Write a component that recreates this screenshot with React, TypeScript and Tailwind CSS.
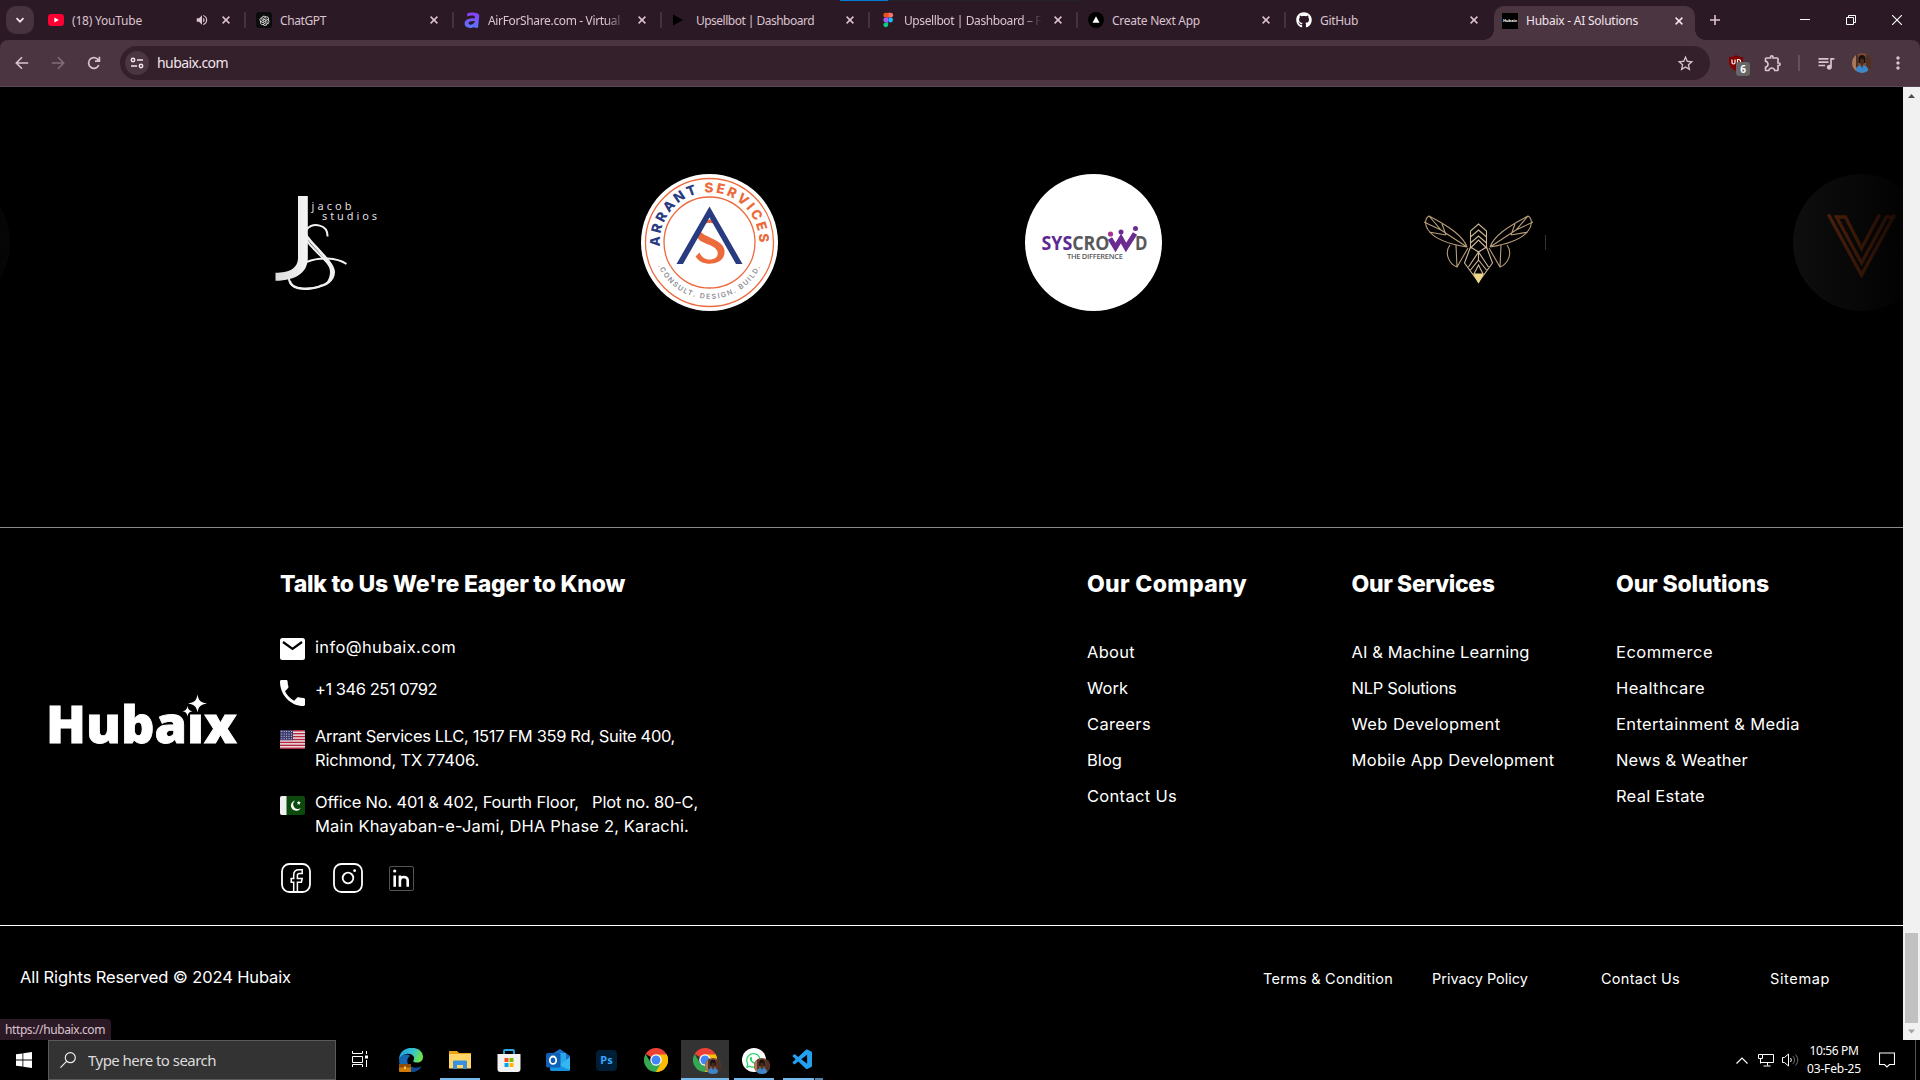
import React, { useLayoutEffect, useRef, useState } from "react";
import { FaGithub } from "react-icons/fa";
import { AiOutlineOpenAI } from "react-icons/ai";
import { FaWhatsapp } from "react-icons/fa";
import { VscVscode } from "react-icons/vsc";
import { MdOutlineExtension, MdOutlineQueueMusic, MdMoreVert, MdStarBorder, MdVolumeUp } from "react-icons/md";

/* Text spaced out evenly so that it fills a given width. */
function Fit({ w, className = "", children }: { w: number; className?: string; children: string }) {
  const ref = useRef<HTMLSpanElement>(null);
  const [spacing, setSpacing] = useState(0);
  useLayoutEffect(() => {
    if (ref.current) {
      const natural = ref.current.getBoundingClientRect().width;
      setSpacing((w - natural) / children.length);
    }
  }, []);
  return (
    <span ref={ref} className={"inline-block whitespace-pre " + className} style={{ letterSpacing: spacing }}>
      {children}
    </span>
  );
}

function CloseX({ active = false }: { active?: boolean }) {
  return (
    <svg viewBox="0 0 8 8" className={"size-2 shrink-0 " + (active ? "text-[#f3e4ec]" : "text-[#dcc3d0]")}>
      <path d="M.6.6l6.8 6.8M7.4.6L.6 7.4" stroke="currentColor" strokeWidth="1.5" />
    </svg>
  );
}

function YoutubeIcon() {
  return (
    <svg viewBox="0 0 16 16" className="size-4">
      <rect y="2" width="16" height="12" rx="3" fill="#ff0033" />
      <path d="M6.4 5.4v5.2L10.8 8z" fill="#fff" />
    </svg>
  );
}
function AirIcon() {
  return (
    <svg viewBox="0 0 16 16" className="size-4">
      <defs>
        <linearGradient id="air" x1="0" y1="0" x2="0" y2="1">
          <stop offset="0" stopColor="#8a3df5" />
          <stop offset="1" stopColor="#5a78ff" />
        </linearGradient>
      </defs>
      <path
        d="M3 1.6C5 .2 15.600-.6 15.300 4L14 15.800h-3.600l.1-1.300C8 17 .6 16.500.6 11.600.6 7.500 5 6 11 6.300 11.600 3.200 7.500 3 3.400 4.600zM10.800 9C7 8.800 4.600 9.600 4.600 11.300c0 2.400 5.600 2 6.200-2.300z"
        fill="url(#air)"
      />
    </svg>
  );
}
function FigmaIcon() {
  return (
    <svg viewBox="0 0 16 16" className="size-4">
      <path d="M5.700.8H8.200v4.800H5.700a2.400 2.400 0 010-4.800z" fill="#f24e1e" />
      <path d="M8.200.8h2.500a2.400 2.400 0 010 4.800H8.200z" fill="#ff7262" />
      <path d="M5.700 5.600h2.500v4.800H5.700a2.400 2.400 0 010-4.800z" fill="#a259ff" />
      <circle cx="10.600" cy="8" r="2.400" fill="#1abcfe" />
      <path d="M5.700 10.400h2.500v2.400a2.450 2.400 0 11-2.500-2.400z" fill="#0acf83" />
    </svg>
  );
}

type TabInfo = { title: string; w: number; icon: React.ReactNode; audio?: boolean; fade?: boolean };
const tabs: TabInfo[] = [
  { title: "(18) YouTube", w: 70, icon: <YoutubeIcon />, audio: true },
  {
    title: "ChatGPT",
    w: 46,
    icon: (
      <span className="flex size-4 items-center justify-center rounded-[3px] bg-[#0c0c0c] text-[#e8e8e8]">
        <AiOutlineOpenAI size={13} />
      </span>
    ),
  },
  { title: "AirForShare.com - Virtual", w: 132, icon: <AirIcon />, fade: true },
  {
    title: "Upsellbot | Dashboard",
    w: 118,
    icon: (
      <svg viewBox="0 0 16 16" className="size-4">
        <path d="M1 2.500v11L11 8z" fill="#000" />
      </svg>
    ),
  },
  { title: "Upsellbot | Dashboard – F", w: 137, icon: <FigmaIcon />, fade: true },
  {
    title: "Create Next App",
    w: 88,
    icon: (
      <svg viewBox="0 0 16 16" className="size-4">
        <circle cx="8" cy="8" r="8" fill="#000" />
        <path d="M8 4.200l3.500 6.600h-7z" fill="#fff" />
      </svg>
    ),
  },
  { title: "GitHub", w: 38, icon: <FaGithub size={16} className="text-white" /> },
];

function TabStrip() {
  return (
    <div className="flex h-10 bg-[#2b1a25] font-['Noto_Sans',sans-serif] text-[12px] text-[#dcc3d0]">
      <div className="mt-[6px] ml-[6px] flex h-7 w-7 shrink-0 items-center justify-center rounded-[10px] bg-[#47333f]">
        <svg viewBox="0 0 10 10" className="size-[10px]">
          <path d="M1.500 3.200L5 6.700l3.500-3.500" stroke="#f3e4ec" strokeWidth="1.700" fill="none" />
        </svg>
      </div>
      <div className="ml-[4px] flex">
        {tabs.map((t, i) => (
          <div key={t.title + i} className={"relative flex h-10 items-center pl-[10px] " + (i === 6 ? "w-[209px]" : "w-[208px]")}>
            <div className="mr-2 size-4 shrink-0">{t.icon}</div>
            <div
              className={
                "mt-px h-5 w-[140px] leading-5 " +
                (t.fade ? "[mask-image:linear-gradient(to_right,black_118px,transparent_138px)]" : "")
              }
            >
              <Fit w={t.w}>{t.title}</Fit>
            </div>
            <div className="-ml-4 flex w-[26px] justify-start">
              {t.audio && <MdVolumeUp size={14} className="-ml-[1px]" />}
            </div>
            <CloseX />
            {i < 6 && <div className="absolute top-3 right-0 h-4 w-[2px] rounded bg-[#47333f]" />}
          </div>
        ))}
      </div>
      <div className="relative -ml-px mt-[6px] flex h-[34px] w-[201px] shrink-0 items-center rounded-t-[10px] bg-[#4a3540] pb-[5px] pl-2 text-[#f3e4ec]">
        <div className="absolute bottom-0 -left-[10px] size-[10px] bg-[radial-gradient(circle_at_0_0,transparent_9.500px,#4a3540_10px)]" />
        <div className="absolute -right-[10px] bottom-0 size-[10px] bg-[radial-gradient(circle_at_100%_0,transparent_9.500px,#4a3540_10px)]" />
        <div className="mr-2 flex size-4 items-center justify-center bg-black text-[4px] font-bold text-white">Hubaix</div>
        <div className="w-[149px] leading-5">
          <Fit w={112}>Hubaix - AI Solutions</Fit>
        </div>
        <CloseX active />
      </div>
      <svg viewBox="0 0 10 10" className="mt-[15px] ml-[15px] size-[10px] shrink-0">
        <path d="M5 0v10M0 5h10" stroke="#dcc3d0" strokeWidth="1.600" />
      </svg>
      <div className="mt-[15px] ml-auto flex h-[10px] gap-[36px] pr-[18px] text-white">
        <svg viewBox="0 0 10 10" className="size-[10px]">
          <path d="M0 4.500h10" stroke="currentColor" />
        </svg>
        <svg viewBox="0 0 10 10" className="size-[10px]" fill="none" stroke="currentColor">
          <path d="M.5 2.500h7v7h-7zM2.500 2.500v-2h7v7h-2" />
        </svg>
        <svg viewBox="0 0 10 10" className="size-[10px]">
          <path d="M0 0l10 10M10 0L0 10" stroke="currentColor" strokeWidth="1.100" />
        </svg>
      </div>
    </div>
  );
}

function Avatar({ className }: { className: string }) {
  return (
    <svg viewBox="0 0 20 20" className={className}>
      <defs>
        <clipPath id="avatar">
          <circle cx="10" cy="10" r="10" />
        </clipPath>
      </defs>
      <g clipPath="url(#avatar)">
        <rect width="20" height="20" fill="#7a4a32" />
        <path d="M0 0h4v20H0z" fill="#a87a5a" />
        <path d="M4 0h2v14H4zM14 2h6v18h-6z" fill="#4f3024" />
        <path d="M6.500 5c.5-4 6.500-4 7 0v5h-7z" fill="#17100f" />
        <ellipse cx="10" cy="8.500" rx="2.200" ry="3" fill="#4a2b20" />
        <path d="M3.500 20c0-6 2-7.500 6.500-7.500s6.500 1.500 6.500 7.500z" fill="#3f86c8" />
        <path d="M9 11.500h2l-1 4z" fill="#3a2119" />
      </g>
    </svg>
  );
}

function Toolbar() {
  return (
    <div className="bg-[#2b1a25]">
      <div className="flex h-[47px] items-center rounded-t-[8px] border-b border-[#5c4853] bg-[#4a3540] text-[#dcc3d0]">
        <div className="flex w-[120px] items-center gap-[20px] pl-[14px]">
          <svg viewBox="0 0 16 16" className="size-4" fill="none" stroke="currentColor" strokeWidth="1.600">
            <path d="M14.200 8H2.500M8 2.300L2.300 8 8 13.700" />
          </svg>
          <svg viewBox="0 0 16 16" className="size-4 text-[#846d79]" fill="none" stroke="currentColor" strokeWidth="1.600">
            <path d="M1.800 8h11.700M8 2.300L13.700 8 8 13.700" />
          </svg>
          <svg viewBox="0 0 16 16" className="size-4" fill="none" stroke="currentColor" strokeWidth="1.700">
            <path d="M12.800 10A5.300 5.300 0 1112.600 5.500M13.400 1.800v4.400H9" />
          </svg>
        </div>
        <div className="flex h-[34px] w-[1590px] items-center rounded-full bg-[#33202b] pr-[15px] pl-[5px]">
          <div className="flex size-6 items-center justify-center rounded-full bg-[#4a3540]">
            <svg viewBox="0 0 14 12" className="h-3 w-[14px]" fill="none" stroke="#f3e4ec" strokeWidth="1.500">
              <circle cx="3" cy="3" r="1.700" />
              <path d="M7 3h6M1 9h6" />
              <circle cx="11" cy="9" r="1.700" />
            </svg>
          </div>
          <div className="ml-[8px] flex-1 font-['Noto_Sans',sans-serif] text-[14px] leading-5 text-[#f3e4ec]">
            <Fit w={71}>hubaix.com</Fit>
          </div>
          <MdStarBorder size={19} />
        </div>
        <div className="relative ml-[18px] h-5 w-[22px]">
          <svg viewBox="0 0 16 16" className="mt-[2px] size-4">
            <path d="M8 0c2 1.500 4 2 7 2v5c0 4-3 7-7 9-4-2-7-5-7-9V2c3 0 5-.5 7-2z" fill="#800000" />
            <path d="M4 4.500v3c0 2 3 2 3 0v-3M9.500 9V4.500h1.200c2.500 0 2.500 4.500 0 4.500z" fill="none" stroke="#fff" strokeWidth="1.200" />
          </svg>
          <div className="absolute top-[9px] left-[8px] flex h-[14px] w-[14px] items-center justify-center rounded-[3px] bg-[#666] font-['Noto_Sans',sans-serif] text-[10px] font-bold text-white">
            6
          </div>
        </div>
        <MdOutlineExtension size={20} className="mb-px ml-[13px]" />
        <div className="ml-[15px] h-4 w-[2px] bg-[#66505c]" />
        <MdOutlineQueueMusic size={20} className="mb-px ml-[16px]" />
        <Avatar className="ml-[16px] size-5" />
        <MdMoreVert size={20} className="ml-[16px]" />
      </div>
    </div>
  );
}

function JacobLogo() {
  return (
    <svg viewBox="257 174 137 137" className="size-[137px]">
      <defs>
        <linearGradient id="js" x1="0" y1="0" x2="1" y2="0">
          <stop offset="0" stopColor="#dcdcdc" />
          <stop offset="1" stopColor="#f5f5f5" />
        </linearGradient>
      </defs>
      <path d="M298 196h9.800v62c0 14-11 22.500-32.300 22.800v-8c13 0 22.500-4 22.500-15z" fill="url(#js)" />
      <path
        d="M327.500 236.500C328 224 313 222.500 307 229c-5 6 1 14 6 19 8 9 21 19 20 27-2 14-41 20-43 6"
        fill="none"
        stroke="#f0f0f0"
        strokeWidth="2"
      />
      <path d="M306 231c1 9 29 29 29 41 0 9-9 15-16 15 7-2 11-8 11-15 0-12-21-28-24-35z" fill="#f0f0f0" />
      <path d="M306.500 262c12-5 30-5 40 2M289 279c1 13 26 10 33 6" fill="none" stroke="#f0f0f0" strokeWidth="2" />
      <g fill="#dedede" fontFamily="Noto Sans, sans-serif" fontSize="11">
        <text x="311.500" y="209.500" textLength="40">jacob</text>
        <text x="322" y="219.500" textLength="55">studios</text>
      </g>
    </svg>
  );
}

function ArrantLogo() {
  return (
    <svg viewBox="-68.500 -68.500 137 137" className="size-[137px]">
      <defs>
        <path id="arcTop" d="M-49.500 4A49.700 49.700 0 1149.500 4" />
        <path id="arcBottom" d="M-51.500 23A56.400 56.400 0 0051.500 23" />
      </defs>
      <circle r="68.500" fill="#fff" />
      <circle r="64" fill="none" stroke="#ec6a3c" strokeWidth="1.300" />
      <circle r="45.500" fill="none" stroke="#ec6a3c" strokeWidth="1.300" />
      <text fontFamily="Inter, sans-serif" fontSize="13.500" fontWeight="800" fill="#283a80">
        <textPath href="#arcTop" textLength="161">
          ARRANT <tspan fill="#ec6a3c">SERVICES</tspan>
        </textPath>
      </text>
      <text fontFamily="Inter, sans-serif" fontSize="7" fontWeight="600" fill="#8b8b93">
        <textPath href="#arcBottom" textLength="128">
          <tspan fill="#ec6a3c">.</tspan>CONSULT<tspan fill="#ec6a3c">.</tspan> DESIGN. BUILD<tspan fill="#ec6a3c">.</tspan>
        </textPath>
      </text>
      <path d="M-3-23h6l3 4.500C3-20-3-20-6-18.500zM-9-11C-5-5 14-3 15 8c1 11-10 14-18 13-6-1-9-4-11-7l4-4c2 5 6 7 10 7 7 0 9-4 8-8C6 2-10 1-12-5z" fill="#ec6a3c" />
      <path d="M0-36l33 57.500h-6.500L0-25l-26.500 46.500h-6.500z" fill="#283a80" />
    </svg>
  );
}

function SyscrowdLogo() {
  return (
    <svg viewBox="1025 174 137 137" className="size-[137px]">
      <circle cx="1093.500" cy="242.500" r="68.500" fill="#fff" />
      <text x="1041.500" y="250" textLength="68" lengthAdjust="spacingAndGlyphs" fontFamily="Open Sans, sans-serif" fontWeight="700" fontSize="19" fill="#58595b">
        <tspan fill="#5d2a91">SYS</tspan>CRO
      </text>
      <text x="1135" y="250" textLength="12.500" lengthAdjust="spacingAndGlyphs" fontFamily="Open Sans, sans-serif" fontWeight="700" fontSize="19" fill="#58595b">
        D
      </text>
      <path d="M1110 238.500l5.500 9 5.500-9 5 9 9-14" fill="none" stroke="#6b2c91" strokeWidth="5" />
      <circle cx="1110.500" cy="234" r="2.600" fill="#a83292" />
      <circle cx="1121" cy="232" r="2.500" fill="#6b2c91" />
      <circle cx="1135.500" cy="228.500" r="2.500" fill="#6b2c91" />
      <text x="1067" y="259" fontFamily="Open Sans, sans-serif" fontWeight="600" fontSize="7.500" textLength="56" fill="#58595b">
        THE DIFFERENCE
      </text>
    </svg>
  );
}

function BeeLogo() {
  const wing = (
    <g>
      <path d="M1467 247c-4-11-17-20-38-31-4 2-5 9 0 15 6 8 19 13 38 16M1429 216l12 14 26 17M1441 230l-17-8M1446 235l-4-11M1446 235l-17-3" />
      <path d="M1450 245c-6 8-1 19 7 22l11-19M1456 245l1 22" />
    </g>
  );
  return (
    <svg viewBox="1409 174 137 137" className="size-[137px]" fill="none" stroke="#b89c78" strokeWidth="1.100">
      {wing}
      <g transform="translate(2957 0) scale(-1 1)">{wing}</g>
      <path
        d="M1470.500 247v-16l8-7 8 7v16l-8 5zM1470.500 237l8-7 8 7M1470.500 243l8-7 8 7M1470.500 248l8-8 8 8M1470.500 247l-6 16 14 19 14-19-6-16M1478.500 252l-10 15M1478.500 252l10 15M1478.500 252v8l-8 10M1478.500 260l8 10M1474 274l4.500-9 4.500 9"
        stroke="#cdb695"
      />
      <path d="M1474 274h9l-4.500 8.500z" fill="#f0d88a" stroke="#f0d88a" />
      <path d="M1545.500 235v15" stroke="#333" strokeWidth="1" />
    </svg>
  );
}

function VLogo() {
  return (
    <svg viewBox="1793.500 174 137 137" className="size-[137px]">
      <defs>
        <linearGradient id="vbg" gradientUnits="userSpaceOnUse" x1="1793" y1="0" x2="1903" y2="0">
          <stop offset="0" stopColor="#0e0e0e" />
          <stop offset="1" stopColor="#020202" />
        </linearGradient>
        <linearGradient id="vfg" gradientUnits="userSpaceOnUse" x1="1826" y1="0" x2="1898" y2="0">
          <stop offset="0" stopColor="#4c200b" />
          <stop offset="1" stopColor="#1c0b03" />
        </linearGradient>
      </defs>
      <circle cx="1862" cy="242.500" r="68.500" fill="url(#vbg)" />
      <path
        d="M1829 214.500l33 60.500 33-60.500M1880 214.500l-18 34-16-31.500h-9l25 46 25-46h9"
        fill="none"
        stroke="url(#vfg)"
        strokeWidth="3.300"
      />
    </svg>
  );
}

function Carousel() {
  return (
    <section className="h-[441px] overflow-hidden border-b border-[#8a8a8a] pt-[87px]">
      <div className="-ml-[251px] flex w-[2304px]">
        {[
          <div className="size-[137px] rounded-full bg-[linear-gradient(to_right,#000_45%,#060606)]" />,
          <JacobLogo />,
          <ArrantLogo />,
          <SyscrowdLogo />,
          <BeeLogo />,
          <VLogo />,
        ].map((logo, i) => (
          <div key={i} className="flex w-96 justify-center">
            {logo}
          </div>
        ))}
      </div>
    </section>
  );
}

function HubaixLogo() {
  return (
    <svg viewBox="40 680 200 80" className="h-[80px] w-[200px]">
      <text
        x="46"
        y="743"
        fontFamily="Open Sans, sans-serif"
        fontWeight="800"
        fontSize="51.500"
        textLength="191"
        lengthAdjust="spacingAndGlyphs"
        fill="#fff"
        stroke="#fff"
        strokeWidth=".8"
      >
        Hubaix
      </text>
      <path d="M186 690h20v22.500h-20z" fill="#000" />
      <g fill="#fff">
        <path d="M197.500 694.500c1 6 3 8 9.500 9-6.500 1-8.500 3-9.500 9-1-6-3-8-9.500-9 6.500-1 8.500-3 9.500-9z" />
        <path d="M187.500 706c.5 3.500 2 4.800 5 5.300-3 .5-4.500 1.800-5 5.300-.5-3.500-2-4.800-5-5.300 3-.5 4.500-1.800 5-5.300z" />
      </g>
    </svg>
  );
}

function UsFlag() {
  return (
    <svg viewBox="0 0 25 19" className="h-[19px] w-[25px] rounded-[2px]">
      <rect width="25" height="19" fill="#f0eef0" />
      {[0, 1, 2, 3, 4, 5, 6].map((i) => (
        <rect key={i} y={i * 2.92} width="25" height="1.500" fill="#b3273e" />
      ))}
      <rect width="13" height="10.200" fill="#3c3b6e" />
      {[0, 1, 2, 3].map((r) =>
        [0, 1, 2, 3, 4].map((c) => <circle key={r * 5 + c} cx={1.8 + c * 2.4} cy={1.5 + r * 2.4} r=".5" fill="#fff" />)
      )}
    </svg>
  );
}
function PkFlag() {
  return (
    <svg viewBox="0 0 25 19" className="h-[19px] w-[25px] rounded-[2px]">
      <rect width="25" height="19" fill="#0b4a0b" />
      <rect width="6.500" height="19" fill="#f0f0f0" />
      <path d="M15 4.500a5.200 5.200 0 105.800 7.500A4.700 4.700 0 1115 4.500z" fill="#fff" />
      <path d="M18.800 4.800l.6 1.300 1.400.2-1 1 .2 1.400-1.200-.7-1.300.7.300-1.400-1-1 1.400-.2z" fill="#fff" />
    </svg>
  );
}

const columns = [
  {
    title: "Our Company",
    w: 160,
    links: [["About", 48], ["Work", 41], ["Careers", 64], ["Blog", 35], ["Contact Us", 90]] as [string, number][],
  },
  {
    title: "Our Services",
    w: 143,
    links: [["AI & Machine Learning", 178], ["NLP Solutions", 105], ["Web Development", 149], ["Mobile App Development", 203]] as [string, number][],
  },
  {
    title: "Our Solutions",
    w: 153,
    links: [["Ecommerce", 97], ["Healthcare", 89], ["Entertainment & Media", 184], ["News & Weather", 132], ["Real Estate", 89]] as [string, number][],
  },
];

function Footer() {
  return (
    <footer className="font-['Inter',sans-serif] text-white">
      <div className="flex h-[397px] pt-10">
        <div className="w-[280px] pt-[112px] pl-[40px]">
          <HubaixLogo />
        </div>
        <div className="w-[807px] text-[16.5px]">
          <h2 className="h-8 text-[23px] leading-8 font-extrabold">
            <Fit w={345}>Talk to Us We're Eager to Know</Fit>
          </h2>
          <div className="mt-[35px] flex h-6 leading-6">
            <svg viewBox="0 0 25 22" className="mt-[3px] mr-[10px] h-[22px] w-[25px]">
              <rect width="25" height="22" rx="2.500" fill="#fff" />
              <path d="M3 4l9.500 7L22 4" fill="none" stroke="#000" strokeWidth="2.200" />
            </svg>
            <Fit w={141}>info@hubaix.com</Fit>
          </div>
          <div className="mt-[18px] flex h-6 leading-6">
            <svg viewBox="3 3 18 18" preserveAspectRatio="none" className="mt-[3px] mr-[10px] h-[26px] w-[25px]" fill="#fff">
              <path d="M6.620 10.790c1.440 2.830 3.760 5.140 6.590 6.590l2.200-2.200c.27-.27.67-.36 1.020-.24 1.120.37 2.330.57 3.570.57.55 0 1 .45 1 1V20c0 .55-.45 1-1 1-9.390 0-17-7.610-17-17 0-.55.45-1 1-1h3.500c.55 0 1 .45 1 1 0 1.250.2 2.450.57 3.570.11.35.03.74-.25 1.020l-2.200 2.200z" />
            </svg>
            <Fit w={122}>+1 346 251 0792</Fit>
          </div>
          <div className="mt-[23px] flex leading-6">
            <div className="mt-[6px] mr-[10px]">
              <UsFlag />
            </div>
            <div className="flex flex-col items-start">
              <Fit w={360}>Arrant Services LLC, 1517 FM 359 Rd, Suite 400,</Fit>
              <Fit w={164}>Richmond, TX 77406.</Fit>
            </div>
          </div>
          <div className="mt-[18px] flex leading-6">
            <div className="mt-[6px] mr-[10px]">
              <PkFlag />
            </div>
            <div className="flex flex-col items-start">
              <Fit w={383}>{"Office No. 401 & 402, Fourth Floor, \u00a0 Plot no. 80-C,"}</Fit>
              <Fit w={374}>Main Khayaban-e-Jami, DHA Phase 2, Karachi.</Fit>
            </div>
          </div>
          <div className="mt-[25px] flex items-center">
            <svg viewBox="0 0 30 30" className="ml-[1px] size-[30px]" fill="none" stroke="#fff" strokeWidth="1.800">
              <rect x="1" y="1" width="28" height="28" rx="7.500" />
              <path d="M12.700 28.500v-9.300h-2.500v-3.700h2.500V12c0-3.500 2.300-5.200 5.500-5.200h3v3.700h-2.700c-1.500 0-2.100.8-2.100 2v3h4.800l-.8 3.700h-4v9.300" strokeWidth="1.500" />
            </svg>
            <svg viewBox="0 0 30 30" className="ml-[22px] size-[30px]" fill="none" stroke="#fff" strokeWidth="1.800">
              <rect x="1" y="1" width="28" height="28" rx="7.500" />
              <circle cx="15" cy="15" r="5.300" />
              <circle cx="21.600" cy="7.700" r="1.400" fill="#fff" stroke="none" />
            </svg>
            <svg viewBox="0 0 25 25" className="ml-[26px] size-[25px]">
              <rect x=".5" y=".5" width="24" height="24" rx="1.500" fill="none" stroke="#6a6a6a" strokeWidth=".8" />
              <circle cx="5.700" cy="5" r="1.600" fill="#fff" />
              <path d="M5.700 9.500v11.200M10.900 20.700V9.500M10.900 14.500c0-4.500 7.800-5 7.800 0v6.200" fill="none" stroke="#fff" strokeWidth="2.600" />
            </svg>
          </div>
        </div>
        {columns.map((c) => (
          <div key={c.title} className="w-[264.500px]">
            <h2 className="h-8 text-[23px] leading-8 font-extrabold">
              <Fit w={c.w}>{c.title}</Fit>
            </h2>
            <ul className="mt-[34px] text-[16.5px]">
              {c.links.map(([label, w]) => (
                <li key={label} className="h-9 leading-9">
                  <Fit w={w}>{label}</Fit>
                </li>
              ))}
            </ul>
          </div>
        ))}
      </div>
      <div className="flex h-[115px] items-start border-t border-white pt-[39px] pl-5 leading-6">
        <div className="w-[1243px] text-[16.5px]">
          <Fit w={271}>All Rights Reserved © 2024 Hubaix</Fit>
        </div>
        <div className="flex pt-[2px] text-[14.5px]">
          <div className="w-[169px]">
            <Fit w={130}>Terms & Condition</Fit>
          </div>
          <div className="w-[169px]">
            <Fit w={96}>Privacy Policy</Fit>
          </div>
          <div className="w-[169px]">
            <Fit w={79}>Contact Us</Fit>
          </div>
          <Fit w={60}>Sitemap</Fit>
        </div>
      </div>
    </footer>
  );
}

function ScrollBar() {
  return (
    <div className="flex h-[953px] w-[17px] flex-col items-center justify-between bg-[#f1f1f1]">
      <svg viewBox="0 0 17 17" className="size-[17px]">
        <path d="M5 11h7L8.500 7z" fill="#505050" />
      </svg>
      <div>
        <div className="mx-auto h-[90px] w-[13px] bg-[#c1c1c1]" />
        <svg viewBox="0 0 17 17" className="size-[17px]">
          <path d="M5 6.500h7l-3.500 4z" fill="#a3a3a3" />
        </svg>
      </div>
    </div>
  );
}

function EdgeIcon() {
  return (
    <svg viewBox="0 0 24 24" className="size-6">
      <defs>
        <linearGradient id="edge" x1="0" y1="0" x2="1" y2=".3">
          <stop offset="0" stopColor="#1b9de2" />
          <stop offset=".6" stopColor="#35c1d0" />
          <stop offset="1" stopColor="#6be24f" />
        </linearGradient>
      </defs>
      <path d="M0 12C0-4 24-3.500 24 9c0 5-5 6.500-9 5-2-1 .5-2 0-4.500C14 4 3 4 0 12z" fill="url(#edge)" />
      <path d="M0 12C2 6 8 5.500 11 8c-4 2-4 10 3 12 4 1 6 0 8-1-2 4-7 5-10 5C5 24 0 19 0 12z" fill="#1467b3" />
      <path d="M10 16c3 5 9 4 12.500 2-3 5-7 6-11 6z" fill="#0c4a94" />
      <rect y="16" width="12" height="8" rx="1" fill="#d07a0c" />
      <path d="M0 17a1 1 0 011-1h10a1 1 0 011 1v2.500H0z" fill="#8e4b08" />
      <rect x="5" y="18.500" width="2" height="2.500" fill="#ffc83d" />
    </svg>
  );
}
function ExplorerIcon() {
  return (
    <svg viewBox="0 0 24 24" className="size-6">
      <path d="M1 3h8l2 2h12v15H1z" fill="#e8a317" />
      <path d="M1 6h22v14.500H1z" fill="#ffd667" />
      <path d="M5 13.500a1 1 0 011-1h12a1 1 0 011 1V21h-4v-4H9v4H5z" fill="#3a8fdd" />
    </svg>
  );
}
function StoreIcon() {
  return (
    <svg viewBox="0 0 24 24" className="size-6">
      <path d="M7 7V3a1 1 0 011-1h8a1 1 0 011 1v4" fill="none" stroke="#29a8ea" strokeWidth="1.800" />
      <path d="M.5 6h23v15a3 3 0 01-3 3h-17a3 3 0 01-3-3z" fill="#f2f2f2" />
      <path d="M7.500 10h4v4h-4z" fill="#f25022" />
      <path d="M12.500 10h4v4h-4z" fill="#7fba00" />
      <path d="M7.500 15h4v4h-4z" fill="#00a4ef" />
      <path d="M12.500 15h4v4h-4z" fill="#ffb900" />
    </svg>
  );
}
function OutlookIcon() {
  return (
    <svg viewBox="0 0 24 24" className="size-6">
      <path d="M4 7l10-6 10 7v13a2 2 0 01-2 2H6a2 2 0 01-2-2z" fill="#1b6fc4" />
      <path d="M7 5h13v12H7z" fill="#28a8ea" />
      <path d="M24 9v12a2 2 0 01-2 2H6z" fill="#35b8f1" />
      <path d="M4 13l20 9-2 1H6a2 2 0 01-2-2z" fill="#1491df" />
      <rect y="5" width="14.500" height="14.500" rx="1.500" fill="#0f5fb5" />
      <ellipse cx="7" cy="12.200" rx="3.200" ry="3.700" fill="none" stroke="#fff" strokeWidth="1.800" />
    </svg>
  );
}
function ChromeIcon() {
  return (
    <svg viewBox="0 0 24 24" className="size-6">
      <path d="M12 12L1.600 6A12 12 0 0122.400 6z" fill="#ea4335" />
      <path d="M12 12L22.400 6A12 12 0 0112 24z" fill="#fbbc04" />
      <path d="M17 15l-5 9A12 12 0 011.600 6l6 10z" fill="#34a853" />
      <path d="M12 6.500h10.700A12 12 0 0112 24l5.500-9z" fill="#fbbc04" />
      <circle cx="12" cy="12" r="5.800" fill="#fff" />
      <circle cx="12" cy="12" r="4.500" fill="#4285f4" />
    </svg>
  );
}

type AppInfo = { icon: React.ReactNode; open?: boolean; active?: boolean; face?: boolean; stacked?: boolean };
const apps: AppInfo[] = [
  { icon: <EdgeIcon /> },
  { icon: <ExplorerIcon />, open: true },
  { icon: <StoreIcon /> },
  { icon: <OutlookIcon /> },
  {
    icon: (
      <div className="mx-auto flex h-[21px] w-[21px] items-center justify-center rounded-[4px] bg-[#001e36] text-[11px] font-bold text-[#31a8ff]">
        Ps
      </div>
    ),
  },
  { icon: <ChromeIcon /> },
  { icon: <ChromeIcon />, open: true, active: true, face: true },
  {
    icon: (
      <div className="flex size-6 items-center justify-center rounded-full bg-white text-[#25d366]">
        <FaWhatsapp size={17} />
      </div>
    ),
    open: true,
    face: true,
  },
  { icon: <VscVscode size={24} className="text-[#23a0ef]" />, open: true, stacked: true },
];

function Taskbar() {
  return (
    <div className="flex h-10 bg-black font-['Noto_Sans',sans-serif] text-white">
      <div className="flex w-12 items-center justify-center">
        <svg viewBox="0 0 16 16" className="mb-px size-4" fill="#fff">
          <path d="M0 2.300L6.500 1.400v6.200H0zM7.300 1.200L16 0v7.600H7.300zM0 8.400h6.500v6.200L0 13.700zM7.300 8.400H16V16l-8.700-1.200z" />
        </svg>
      </div>
      <div className="flex w-72 items-center border border-[#5a5a5a] bg-[#333] pl-[11px]">
        <svg viewBox="0 0 16 16" className="mb-px size-4" fill="none" stroke="#eee" strokeWidth="1.200">
          <circle cx="10.300" cy="5.700" r="5" />
          <path d="M6.800 9.200L.4 15.600" />
        </svg>
        <div className="ml-3 text-[15px] leading-6 text-[#dcdcdc]">
          <Fit w={128}>Type here to search</Fit>
        </div>
      </div>
      <div className="flex w-[50px] items-center pl-4">
        <svg viewBox="0 0 16 16" className="mb-[2px] size-4" fill="none" stroke="#fff">
          <path d="M.5 0v2.500h10V0M.5 5.500h10v6H.5zM.5 16v-2.500h10V16M14.500 0v3M14.500 9v7" />
          <rect x="13" y="4.500" width="3" height="3" fill="#fff" stroke="none" />
        </svg>
      </div>
      <div className="flex">
        {apps.map((a, i) => (
          <div key={i} className="flex w-[49px] justify-center">
            <div className={"relative flex h-10 w-12 items-center justify-center " + (a.active ? "bg-[#333]" : "")}>
              <div className="relative">
                {a.icon}
                {a.face && <Avatar className="absolute -right-1 -bottom-[2px] size-4" />}
              </div>
              {a.open && (
                <div className={"absolute bottom-0 flex h-[2px] justify-end bg-[#76b9ed] " + (a.active ? "w-12" : "w-10")}>
                  {a.stacked && <div className="h-[2px] w-[9px] border-l border-black bg-[#5585aa]" />}
                </div>
              )}
            </div>
          </div>
        ))}
      </div>
      <div className="ml-auto flex items-center">
        <svg viewBox="0 0 12 7" className="h-[7px] w-3" fill="none" stroke="#fff" strokeWidth="1.200">
          <path d="M.5 6.500L6 1l5.500 5.500" />
        </svg>
        <svg viewBox="0 0 16 14" className="ml-[10px] h-[14px] w-4" fill="none" stroke="#fff">
          <path d="M4.500 1.500h11v8h-13v-4M9.500 9.500v3M5.500 13h7M.5 1.500h4v4h-4zM2.500 5.500v5" />
        </svg>
        <svg viewBox="0 0 17 14" className="ml-[8px] h-[14px] w-[17px]" fill="none" stroke="#fff">
          <path d="M.5 4.500h2l4-3.500v12l-4-3.500h-2zM8.500 5c1 1.300 1 2.700 0 4" />
          <path d="M11 3.200c2 2.500 2 5.100 0 7.600M13.500 1.500c3 3.500 3 7.500 0 11" stroke="#777" />
        </svg>
        <div className="mr-px ml-[8px] flex w-[54px] flex-col items-center text-[12px] leading-[18px]">
          <Fit w={49}>10:56 PM</Fit>
          <Fit w={54}>03-Feb-25</Fit>
        </div>
        <svg viewBox="0 0 16 16" className="ml-[17px] size-4" fill="none" stroke="#fff" strokeWidth="1.100">
          <path d="M.5 1h15v11.500h-5L8 15l-2.500-2.500h-5z" />
        </svg>
        <div className="mr-1 ml-[20px] h-10 w-px bg-[#555]" />
      </div>
    </div>
  );
}

export default function App() {
  return (
    <div className="relative h-[1080px] w-[1920px] overflow-hidden bg-black">
      <TabStrip />
      <div className="absolute top-0 left-[840px] flex h-px w-60 bg-[#222326]">
        <div className="h-px w-12 bg-[#0078d7]" />
      </div>
      <Toolbar />
      <div className="flex h-[953px]">
        <main className="w-[1903px] overflow-hidden bg-black">
          <Carousel />
          <Footer />
        </main>
        <ScrollBar />
      </div>
      <div className="absolute top-[1019px] left-0 h-[21px] w-[111px] rounded-tr-[4px] bg-[#2b1a25] pl-[5px] font-['Noto_Sans',sans-serif] text-[12px] leading-[22px] text-[#dcc3d0]">
        <Fit w={100}>https://hubaix.com</Fit>
      </div>
      <Taskbar />
    </div>
  );
}
